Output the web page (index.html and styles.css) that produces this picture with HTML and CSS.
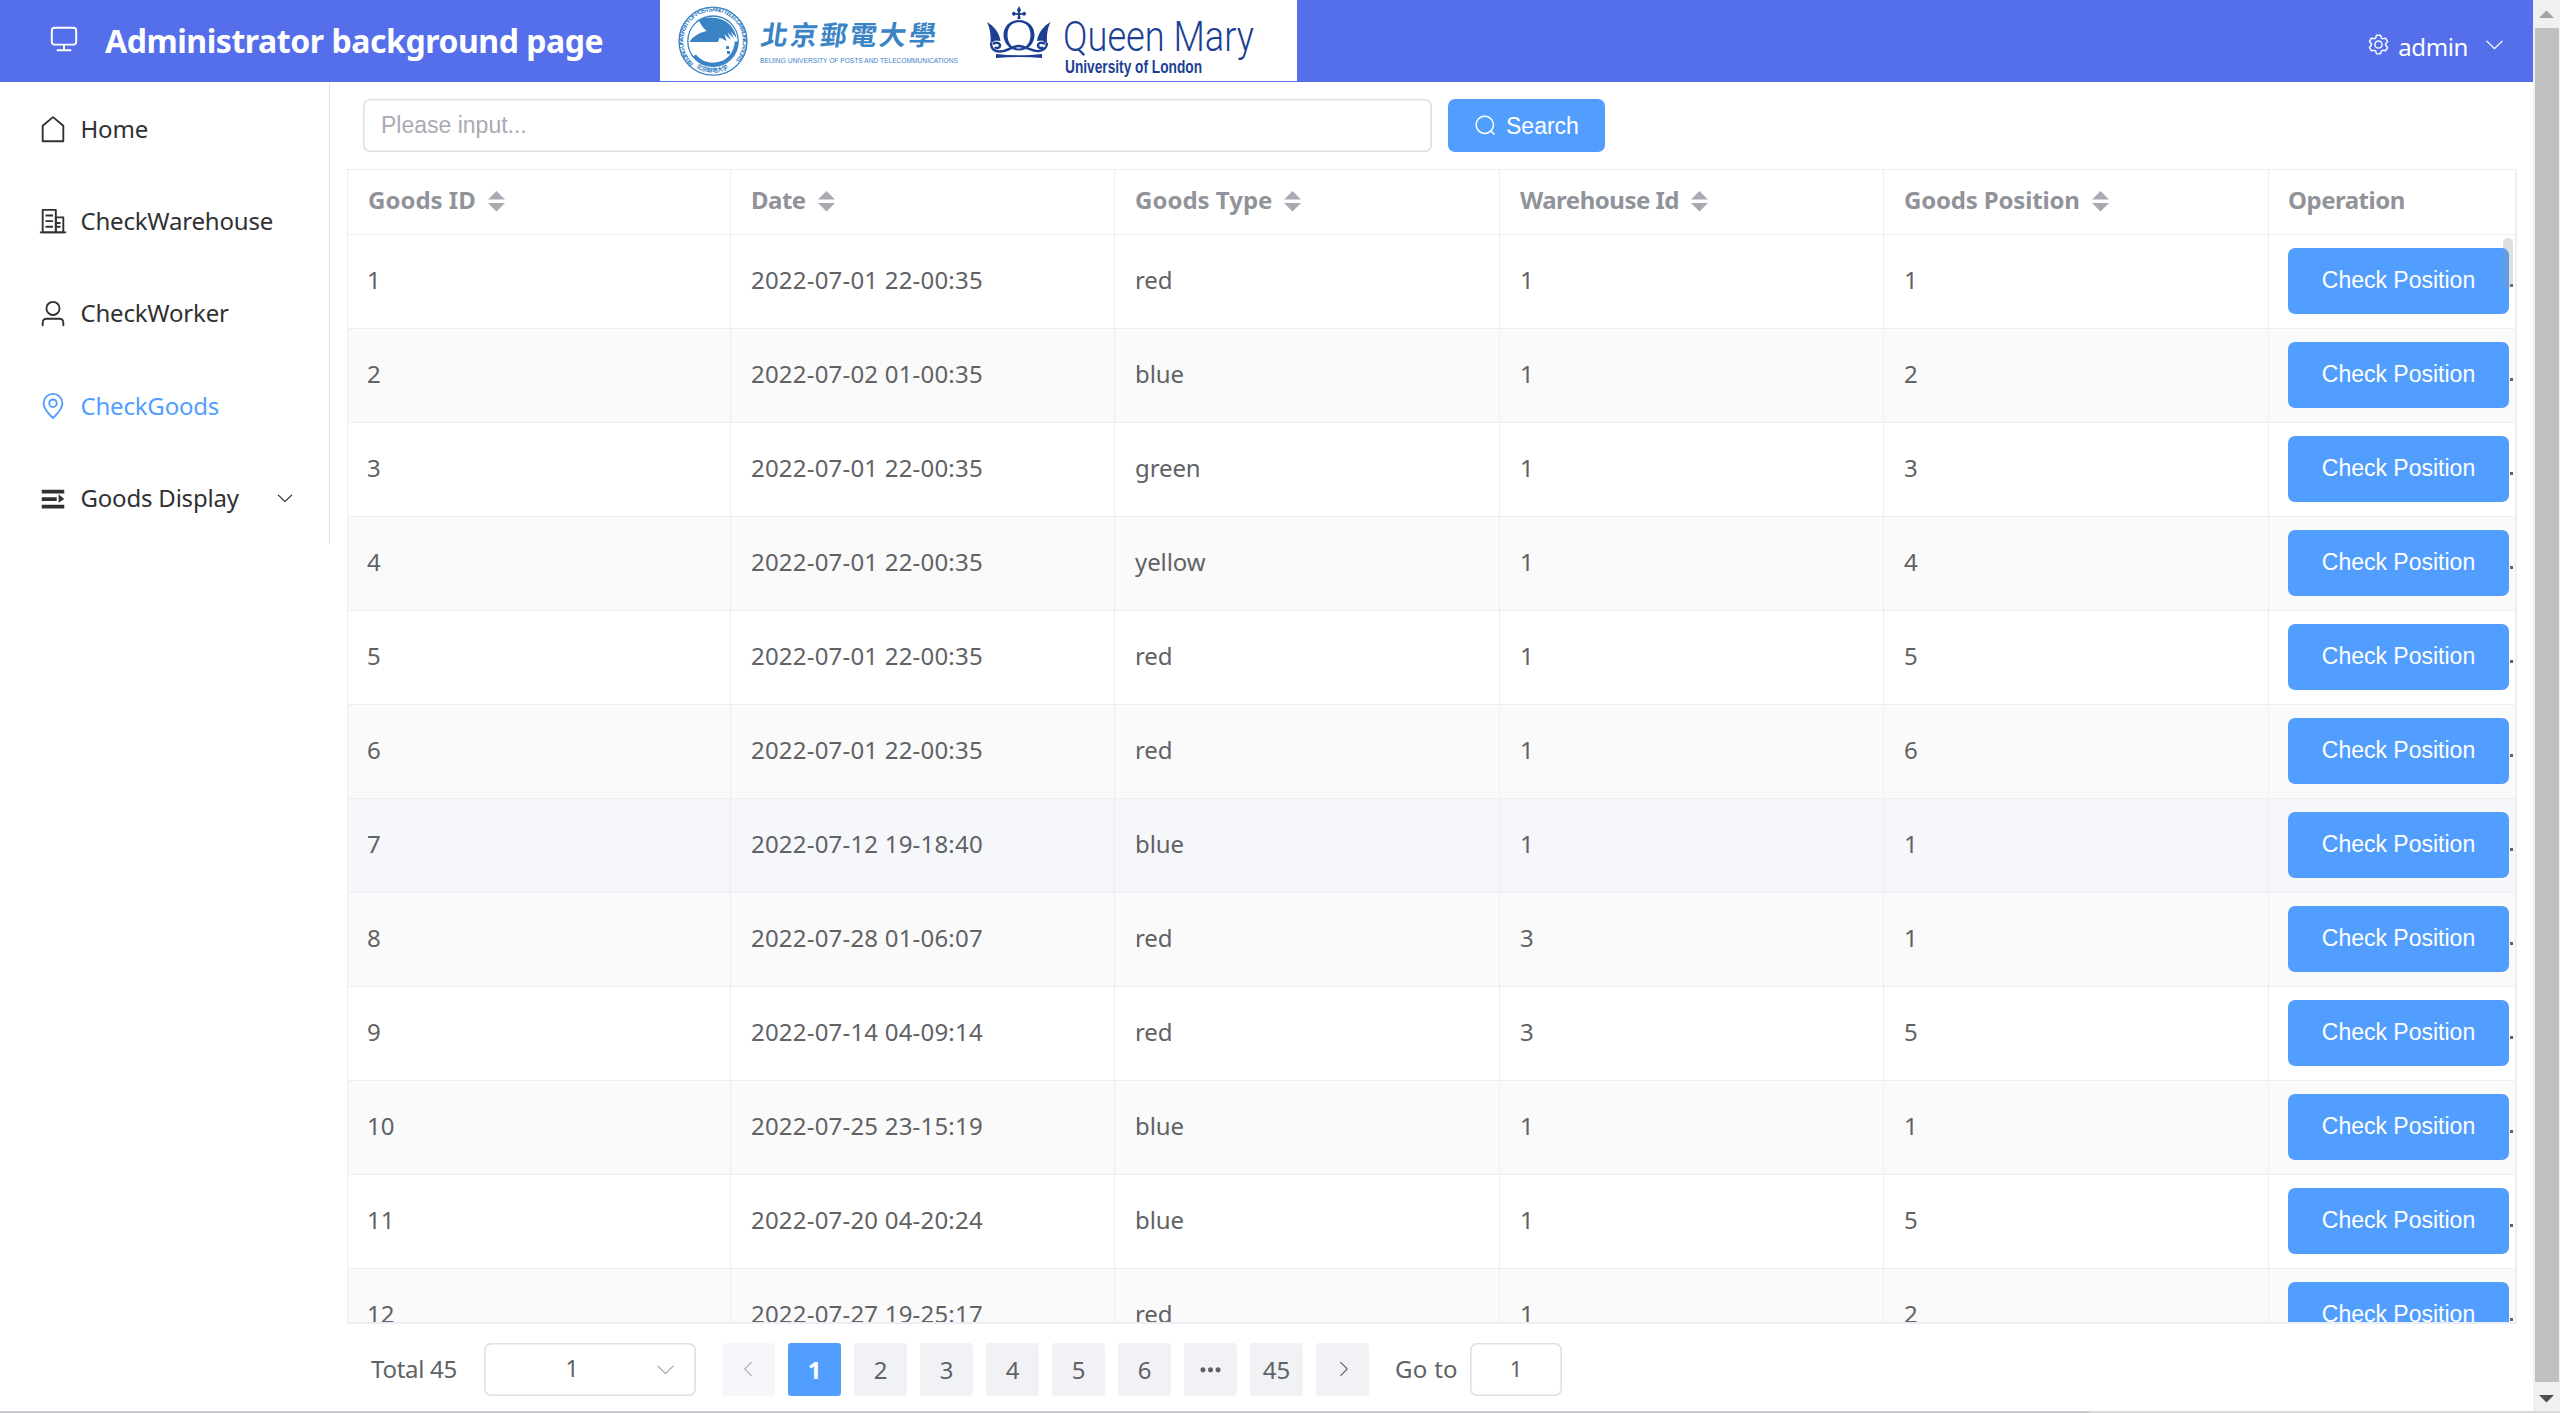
FILE: index.html
```
<!DOCTYPE html>
<html lang="en">
<head>
<meta charset="utf-8">
<title>Administrator background page</title>
<link rel="stylesheet" href="styles.css">
</head>
<body>
<svg class="sprite" aria-hidden="true">
  <symbol id="monitor" viewBox="0 0 1024 1024"><path d="M544 768v128h192a32 32 0 1 1 0 64H288a32 32 0 1 1 0-64h192V768H192A128 128 0 0 1 64 640V256a128 128 0 0 1 128-128h640a128 128 0 0 1 128 128v384a128 128 0 0 1-128 128H544zM192 192a64 64 0 0 0-64 64v384a64 64 0 0 0 64 64h640a64 64 0 0 0 64-64V256a64 64 0 0 0-64-64H192z"/></symbol>
  <symbol id="house" viewBox="0 0 1024 1024"><path d="M192 413.952V896h640V413.952L512 147.328 192 413.952zM139.52 374.4l352-293.312a32 32 0 0 1 40.96 0l352 293.312A32 32 0 0 1 896 398.976V928a32 32 0 0 1-32 32H160a32 32 0 0 1-32-32V398.976a32 32 0 0 1 11.52-24.576z"/></symbol>
  <symbol id="office" viewBox="0 0 1024 1024"><path d="M192 128v704h384V128H192zm-32-64h448a32 32 0 0 1 32 32v768a32 32 0 0 1-32 32H160a32 32 0 0 1-32-32V96a32 32 0 0 1 32-32z"/><path d="M256 256h256v64H256v-64zm0 192h256v64H256v-64zm0 192h256v64H256v-64zm384-128h128v64H640v-64zm0 128h128v64H640v-64zM64 832h896v64H64v-64z"/><path d="M640 384v448h192V384H640zm-32-64h256a32 32 0 0 1 32 32v512a32 32 0 0 1-32 32H608a32 32 0 0 1-32-32V352a32 32 0 0 1 32-32z"/></symbol>
  <symbol id="user" viewBox="0 0 1024 1024"><path d="M512 512a192 192 0 1 0 0-384 192 192 0 0 0 0 384zm0 64a256 256 0 1 1 0-512 256 256 0 0 1 0 512zm320 320v-96a96 96 0 0 0-96-96H288a96 96 0 0 0-96 96v96a32 32 0 1 1-64 0v-96a160 160 0 0 1 160-160h448a160 160 0 0 1 160 160v96a32 32 0 1 1-64 0z"/></symbol>
  <symbol id="location" viewBox="0 0 1024 1024"><path d="M800 416a288 288 0 1 0-576 0c0 118.144 94.528 272.128 288 456.576C705.472 688.128 800 534.144 800 416zM512 960C277.312 746.688 160 565.312 160 416a352 352 0 0 1 704 0c0 149.312-117.312 330.688-352 544z"/><path d="M512 512a96 96 0 1 0 0-192 96 96 0 0 0 0 192zm0 64a160 160 0 1 1 0-320 160 160 0 0 1 0 320z"/></symbol>
  <symbol id="expand" viewBox="0 0 1024 1024"><path d="M128 192h768v128H128V192zm0 256h512v128H128V448zm0 256h768v128H128V704zm576-352 192 160-192 128V352z"/></symbol>
  <symbol id="setting" viewBox="0 0 1024 1024"><path d="M600.704 64a32 32 0 0 1 30.464 22.208l35.2 109.376c14.784 7.232 28.928 15.36 42.432 24.512l112.384-24.192a32 32 0 0 1 34.432 15.36L944.32 364.8a32 32 0 0 1-4.032 37.504l-77.12 85.12a357.12 357.12 0 0 1 0 49.024l77.12 85.248a32 32 0 0 1 4.032 37.504l-88.704 153.6a32 32 0 0 1-34.432 15.296L708.8 803.904c-13.44 9.088-27.648 17.28-42.368 24.512l-35.264 109.376A32 32 0 0 1 600.704 960H423.296a32 32 0 0 1-30.464-22.208L357.696 828.48a351.616 351.616 0 0 1-42.56-24.64l-112.32 24.256a32 32 0 0 1-34.432-15.36L79.68 659.2a32 32 0 0 1 4.032-37.504l77.12-85.248a357.12 357.12 0 0 1 0-48.896l-77.12-85.248A32 32 0 0 1 79.68 364.8l88.704-153.6a32 32 0 0 1 34.432-15.296l112.32 24.256c13.568-9.152 27.776-17.408 42.56-24.64l35.2-109.312A32 32 0 0 1 423.232 64H600.64zm-23.424 64H446.72l-36.352 113.088-24.512 11.968a294.113 294.113 0 0 0-34.816 20.096l-22.656 15.36-116.224-25.088-65.28 113.152 79.68 88.192-1.92 27.136a293.12 293.12 0 0 0 0 40.192l1.92 27.136-79.808 88.192 65.344 113.152 116.224-25.024 22.656 15.296a294.113 294.113 0 0 0 34.816 20.096l24.512 11.968L446.72 896h130.688l36.48-113.152 24.448-11.904a288.282 288.282 0 0 0 34.752-20.096l22.592-15.296 116.288 25.024 65.28-113.152-79.744-88.192 1.92-27.136a293.12 293.12 0 0 0 0-40.256l-1.92-27.136 79.808-88.128-65.344-113.152-116.288 24.96-22.592-15.232a287.616 287.616 0 0 0-34.752-20.096l-24.448-11.904L577.344 128zM512 320a192 192 0 1 1 0 384 192 192 0 0 1 0-384zm0 64a128 128 0 1 0 0 256 128 128 0 0 0 0-256z"/></symbol>
  <symbol id="down" viewBox="0 0 1024 1024"><path d="M831.872 340.864 512 652.672 192.128 340.864a30.592 30.592 0 0 0-42.752 0 29.12 29.12 0 0 0 0 41.6L489.664 714.24a32 32 0 0 0 44.672 0l340.288-331.712a29.12 29.12 0 0 0 0-41.728 30.592 30.592 0 0 0-42.752 0z"/></symbol>
  <symbol id="left" viewBox="0 0 1024 1024"><path d="M609.408 149.376 277.76 489.6a32 32 0 0 0 0 44.672l331.648 340.352a29.12 29.12 0 0 0 41.728 0 30.592 30.592 0 0 0 0-42.752L339.264 511.936l311.872-319.872a30.592 30.592 0 0 0 0-42.688 29.12 29.12 0 0 0-41.728 0z"/></symbol>
  <symbol id="search" viewBox="0 0 1024 1024"><path d="m795.904 750.72 124.608 124.608a32 32 0 0 1-45.248 45.248L750.656 795.904a416 416 0 1 1 45.248-45.248zM480 832a352 352 0 1 0 0-704 352 352 0 0 0 0 704z"/></symbol>
  <symbol id="more" viewBox="0 0 1024 1024"><path d="M176 416a112 112 0 1 1 0 224 112 112 0 0 1 0-224zm336 0a112 112 0 1 1 0 224 112 112 0 0 1 0-224zm336 0a112 112 0 1 1 0 224 112 112 0 0 1 0-224z"/></symbol>
  <symbol id="sort" viewBox="0 0 17 21"><path d="M8.5 0 17 8.5H0zM0 12h17l-8.5 8.5z"/></symbol>
</svg>

<div class="window">
  <div class="page">
    <header class="topbar">
      <svg class="topbar-icon"><use href="#monitor"/></svg>
      <h1>Administrator background page</h1>
      <svg class="logos" viewBox="0 0 637 81">
        <rect width="637" height="81" fill="#fff"/>
        <g fill="#3a84c6">
          <g fill="none" stroke="#3a84c6">
            <circle cx="53" cy="41.2" r="34" stroke-width="1.3"/>
            <circle cx="53" cy="41.2" r="25.2" stroke-width="1.3"/>
            <path d="M76.500 41.500A23.500 23.500 0 0 1 34.500 55.500" stroke-width="3.600"/>
          </g>
          <path d="M29.500 42C32 37.500 36 35.500 40 33L46.500 31C42 27 40 23 38.500 19.500C46 16.500 57 16.500 65 21C71 24.500 75.500 31 76.500 38L70.500 31.500L74 38.500L67.500 32.500L71 40L64.500 34.500L66.500 41C62 38.500 61 38 59.500 38L58 42Z"/>
          <path d="M66 46h3v3h-3zm1 5h3v3h-3zM69 56h3v3h-3z"/>
          <path id="ringTop" d="M33.500 63.500A29.700 29.700 0 1 1 73 63" fill="none"/>
          <path id="ringBottom" d="M36 67.500A31.500 31.500 0 0 0 70 67.500" fill="none"/>
          <text class="ring"><textPath href="#ringTop" textLength="139">BEIJING UNIVERSITY OF POSTS AND TELECOMMUNICATIONS</textPath></text>
          <text class="ring ring-cjk"><textPath href="#ringBottom" textLength="34">北京邮电大学</textPath></text>
          <text class="bupt-cjk" x="100" y="45" textLength="175" transform="skewX(-8) translate(6 0)">北京郵電大學</text>
          <text class="bupt-en" x="100" y="63" textLength="198" lengthAdjust="spacingAndGlyphs">BEIJING UNIVERSITY OF POSTS AND TELECOMMUNICATIONS</text>
        </g>
        <g fill="#1c3f94">
          <path d="M359 6l2 4-1.200 3.200 2.700-.2c1-2 3.500-1.200 3.500.8s-2.500 2.800-3.500 1l-2.600.2.800 4h-3.400l.8-4-2.600-.2c-1 1.800-3.500 1-3.500-1s2.500-2.800 3.500-.8l2.700.2L357 10z"/>
          <path fill-rule="evenodd" d="M359 20c9 0 15.500 6.500 15.500 15S368 50.500 359 50.500 343.500 43.500 343.500 35 350 20 359 20zm0 2.200c-7.500 0-11.500 5.300-11.500 12.800s4 13.600 11.500 13.600S370.500 42.500 370.500 35 366.500 22.200 359 22.200z"/>
          <path d="M327 22c7 4 12.500 11 13.500 19l-5-.5-5 3C331 35 330 28 327 22zM390.500 22c-7 4-12.500 11-13.500 19l5-.5 5 3C386.500 35 387.500 28 390.500 22z"/>
          <g fill="none" stroke="#1c3f94" stroke-width="2.400">
            <path d="M333 44c3-2.500 7-1 7 1.500s-3.500 3.500-5 1.500M385 44c-3-2.500-7-1-7 1.500s3.500 3.500 5 1.500"/>
            <path d="M331 43c0 6 3 8.500 8 8.500 10 0 13-6 20-5.500s14 6 20 5c5-.8 8-3 8-8"/>
          </g>
          <path d="M336 54c15 1.800 31 1.800 46 0v4c-15-1.200-31-1.200-46 0z"/>
          <text class="qm-name" x="403" y="50.500" textLength="191" lengthAdjust="spacingAndGlyphs">Queen Mary</text>
          <text class="qm-sub" x="405" y="73" textLength="137" lengthAdjust="spacingAndGlyphs">University of London</text>
        </g>
      </svg>
      <div class="account">
        <svg class="i23"><use href="#setting"/></svg>
        <span>admin</span>
        <svg class="i23 account-arrow"><use href="#down"/></svg>
      </div>
    </header>

    <div class="body">
      <nav class="menu">
        <a class="item"><svg><use href="#house"/></svg><span>Home</span></a>
        <a class="item"><svg><use href="#office"/></svg><span>CheckWarehouse</span></a>
        <a class="item"><svg><use href="#user"/></svg><span>CheckWorker</span></a>
        <a class="item active"><svg><use href="#location"/></svg><span>CheckGoods</span></a>
        <a class="item"><svg><use href="#expand"/></svg><span>Goods Display</span><svg class="item-arrow"><use href="#down"/></svg></a>
      </nav>

      <main class="content">
        <div class="searchbar">
          <div class="input">Please input...</div>
          <button class="search"><svg class="i23"><use href="#search"/></svg>Search</button>
        </div>

        <div class="table-box">
          <table>
            <colgroup><col class="c1"><col class="c2"><col class="c3"><col class="c4"><col class="c5"><col class="c6"></colgroup>
            <thead>
              <tr><th class="loose">Goods ID<svg><use href="#sort"/></svg></th><th class="tight">Date<svg><use href="#sort"/></svg></th><th class="loose">Goods Type<svg><use href="#sort"/></svg></th><th class="tight">Warehouse Id<svg><use href="#sort"/></svg></th><th>Goods Position<svg><use href="#sort"/></svg></th><th class="tight">Operation</th></tr>
            </thead>
            <tbody>
              <tr><td>1</td><td>2022-07-01 22-00:35</td><td>red</td><td>1</td><td>1</td><td class="op"><button>Check Position</button><i></i></td></tr>
              <tr><td>2</td><td>2022-07-02 01-00:35</td><td>blue</td><td>1</td><td>2</td><td class="op"><button>Check Position</button><i></i></td></tr>
              <tr><td>3</td><td>2022-07-01 22-00:35</td><td>green</td><td>1</td><td>3</td><td class="op"><button>Check Position</button><i></i></td></tr>
              <tr><td>4</td><td>2022-07-01 22-00:35</td><td>yellow</td><td>1</td><td>4</td><td class="op"><button>Check Position</button><i></i></td></tr>
              <tr><td>5</td><td>2022-07-01 22-00:35</td><td>red</td><td>1</td><td>5</td><td class="op"><button>Check Position</button><i></i></td></tr>
              <tr><td>6</td><td>2022-07-01 22-00:35</td><td>red</td><td>1</td><td>6</td><td class="op"><button>Check Position</button><i></i></td></tr>
              <tr class="hover"><td>7</td><td>2022-07-12 19-18:40</td><td>blue</td><td>1</td><td>1</td><td class="op"><button>Check Position</button><i></i></td></tr>
              <tr><td>8</td><td>2022-07-28 01-06:07</td><td>red</td><td>3</td><td>1</td><td class="op"><button>Check Position</button><i></i></td></tr>
              <tr><td>9</td><td>2022-07-14 04-09:14</td><td>red</td><td>3</td><td>5</td><td class="op"><button>Check Position</button><i></i></td></tr>
              <tr><td>10</td><td>2022-07-25 23-15:19</td><td>blue</td><td>1</td><td>1</td><td class="op"><button>Check Position</button><i></i></td></tr>
              <tr><td>11</td><td>2022-07-20 04-20:24</td><td>blue</td><td>1</td><td>5</td><td class="op"><button>Check Position</button><i></i></td></tr>
              <tr><td>12</td><td>2022-07-27 19-25:17</td><td>red</td><td>1</td><td>2</td><td class="op"><button>Check Position</button><i></i></td></tr>
            </tbody>
          </table>
          <div class="thumb"></div>
        </div>

        <div class="pagination">
          <span class="total">Total 45</span>
          <div class="select"><span>1</span><svg class="i23"><use href="#down"/></svg></div>
          <div class="pager">
            <button class="prev"><svg><use href="#left"/></svg></button>
            <button class="current">1</button>
            <button>2</button>
            <button>3</button>
            <button>4</button>
            <button>5</button>
            <button>6</button>
            <button><svg class="i23"><use href="#more"/></svg></button>
            <button>45</button>
            <button class="next"><svg><use href="#left"/></svg></button>
          </div>
          <span class="goto">Go to</span>
          <div class="jump">1</div>
        </div>
      </main>
    </div>
  </div>

  <div class="scrollbar">
    <svg viewBox="0 0 27 28"><path d="M6 18h15l-7.500-7.500z" fill="#a3a3a3"/></svg>
    <div class="scroll-thumb"></div>
    <svg class="scroll-down" viewBox="0 0 27 29"><path d="M6 13h15l-7.500 7.500z" fill="#505050"/></svg>
  </div>
</div>
<div class="edge"></div>
</body>
</html>
```
FILE: styles.css
```
* { box-sizing: border-box; }
body {
  margin: 0;
  width: 2560px;
  height: 1413px;
  overflow: hidden;
  background: #fff;
  color: #606266;
  font: 24px/34px "Noto Sans", "Open Sans", sans-serif;
}
svg { fill: currentColor; flex: none; }
button { border: 0; padding: 0; margin: 0; font: inherit; color: inherit; }
.sprite { display: none; }
.i23 { width: 23px; height: 23px; }

.window { display: flex; height: 1411px; }
.page { width: 2533px; }
.edge { height: 2px; background: linear-gradient(90deg, #cbcbd0 2090px, #dadada 2090px); }

/* top bar */
.topbar {
  display: flex;
  height: 82px;
  background: #556ee9;
  color: #fff;
}
.topbar-icon { width: 30px; height: 30px; margin: 23px 0 0 49px; }
.topbar h1 {
  width: 555px;
  margin: 19px 0 0 26px;
  font-size: 32px;
  line-height: 44px;
  letter-spacing: -.45px;
  white-space: nowrap;
}
.logos { width: 637px; height: 81px; }
.account { display: flex; margin-left: auto; padding: 33px 27px 0 0; }
.account span { margin: -3px 0 0 8px; letter-spacing: -.4px; }
.account-arrow { margin-left: 15px; }
.ring { font: 700 6.300px "Liberation Sans", sans-serif; }
.ring-cjk { font: 700 6px "Noto Sans CJK SC", sans-serif; }
.bupt-cjk { font: 700 27px "Noto Sans CJK TC", sans-serif; }
.bupt-en { font: 400 7.200px "Liberation Sans", Arial, sans-serif; }
.qm-name { font: 300 42px Roboto, sans-serif; }
.qm-sub { font: 700 18px "Liberation Sans", Arial, sans-serif; }

/* side menu */
.body { display: flex; }
.menu {
  width: 330px;
  height: 461px;
  margin-top: 1px;
  border-right: 1px solid #dcdfe6;
}
.item {
  display: flex;
  align-items: center;
  height: 92.400px;
  padding-left: 38px;
  color: #303133;
  letter-spacing: -.2px;
}
.item svg { width: 30px; height: 30px; }
.item span { margin-left: 12.500px; padding-bottom: 1px; }
.item svg.item-arrow { width: 20px; height: 20px; margin: -2px 34px 0 auto; }
.active { color: #529eff; }

/* search row */
.content { width: 2170px; margin-left: 17px; }
.searchbar { display: flex; gap: 16px; padding: 17px 0 17px 16px; height: 87px; }
.input, .search {
  height: 53px;
  border-radius: 7px;
  font-family: "Liberation Sans", Arial, sans-serif;
  font-size: 23px;
  line-height: 52px;
}
.input { width: 1069px; padding-left: 18px; color: #a8abb2; box-shadow: inset 0 0 0 1.600px #dcdfe6; }
.search {
  display: flex;
  align-items: center;
  width: 157px;
  padding-left: 26px;
  background: #529eff;
  color: #fff;
}
.search svg { margin-right: 9px; }

/* goods table */
.table-box {
  position: relative;
  height: 1155px;
  overflow: hidden;
  border: 1px solid #ebeef5;
  border-width: 1px 2px 2px 1px;
}
table { width: 2167px; table-layout: fixed; border-collapse: separate; border-spacing: 0; }
.c1 { width: 383px; }
.c2, .c4 { width: 384px; }
.c3, .c5 { width: 385px; }
.c6 { width: 246px; }
th, td {
  padding: 0 0 4px 20px;
  border: 0 solid #ebeef5;
  border-width: 0 1px 1px 0;
  text-align: left;
  vertical-align: middle;
  white-space: nowrap;
}
th:last-child, td:last-child { border-right: 0; padding-left: 19px; }
th { height: 65px; color: #909399; font-weight: 700; letter-spacing: -.18px; }
th.loose { letter-spacing: 0; }
th.tight { letter-spacing: -.5px; }
th svg { width: 17px; height: 21px; margin-left: 12px; vertical-align: -3px; color: #a8abb2; }
td { height: 94px; letter-spacing: .2px; }
td:nth-child(3) { letter-spacing: -.1px; }
td:first-child { padding-left: 19px; letter-spacing: 0; }
tbody tr:nth-child(even) { background: #fafafa; }
tbody tr.hover { background: #f5f7fa; }
td.op { padding-bottom: 2px; }
.op button {
  width: 221px;
  height: 66px;
  padding-bottom: 1px;
  border-radius: 7px;
  background: #529eff;
  color: #fff;
  font: 23px "Liberation Sans", Arial, sans-serif;
  vertical-align: middle;
}
.op i {
  display: inline-block;
  width: 3px;
  height: 3px;
  margin: 10px 0 0 1px;
  background: #606266;
  vertical-align: middle;
}
.thumb {
  position: absolute;
  top: 68px;
  right: 2px;
  width: 10px;
  height: 50px;
  border-radius: 5px;
  background: rgba(144, 147, 153, .3);
}

/* pagination */
.pagination { display: flex; padding: 19px 0 0 24px; height: 87px; }
.pagination > * { height: 53px; line-height: 51px; }
.total { width: 113px; letter-spacing: -.27px; }
.select {
  display: flex;
  align-items: center;
  width: 212px;
  padding-right: 19px;
  border-radius: 7px;
  box-shadow: inset 0 0 0 1.600px #dcdfe6;
}
.select span { flex: 1; padding: 0 0 2px 6px; text-align: center; font-size: 23px; }
.select svg { color: #a8abb2; }
.pager { display: flex; gap: 13px; margin-left: 26px; }
.pager button {
  display: flex;
  align-items: center;
  justify-content: center;
  width: 53px;
  padding-bottom: 1px;
  border-radius: 3px;
  background: #f0f2f5;
}
.pager svg { width: 20px; height: 20px; }
.pager svg.i23 { width: 23px; height: 23px; }
.pager .prev { background: #f5f7fa; color: #a8abb2; }
.pager .current { background: #529eff; color: #fff; font-weight: 700; }
.next svg { transform: scaleX(-1); }
.goto { width: 75px; margin-left: 26px; letter-spacing: .3px; }
.jump {
  width: 92px;
  border-radius: 7px;
  box-shadow: inset 0 0 0 1.600px #dcdfe6;
  text-align: center;
  font-size: 22px;
}

/* window scrollbar */
.scrollbar { display: flex; flex-direction: column; width: 27px; background: #f0f0f0; }
.scrollbar svg { width: 27px; height: 28px; }
.scrollbar svg.scroll-down { height: 29px; }
.scroll-thumb { flex: 1; margin: 0 1px 0 2px; background: #c0c0c0; }
```
